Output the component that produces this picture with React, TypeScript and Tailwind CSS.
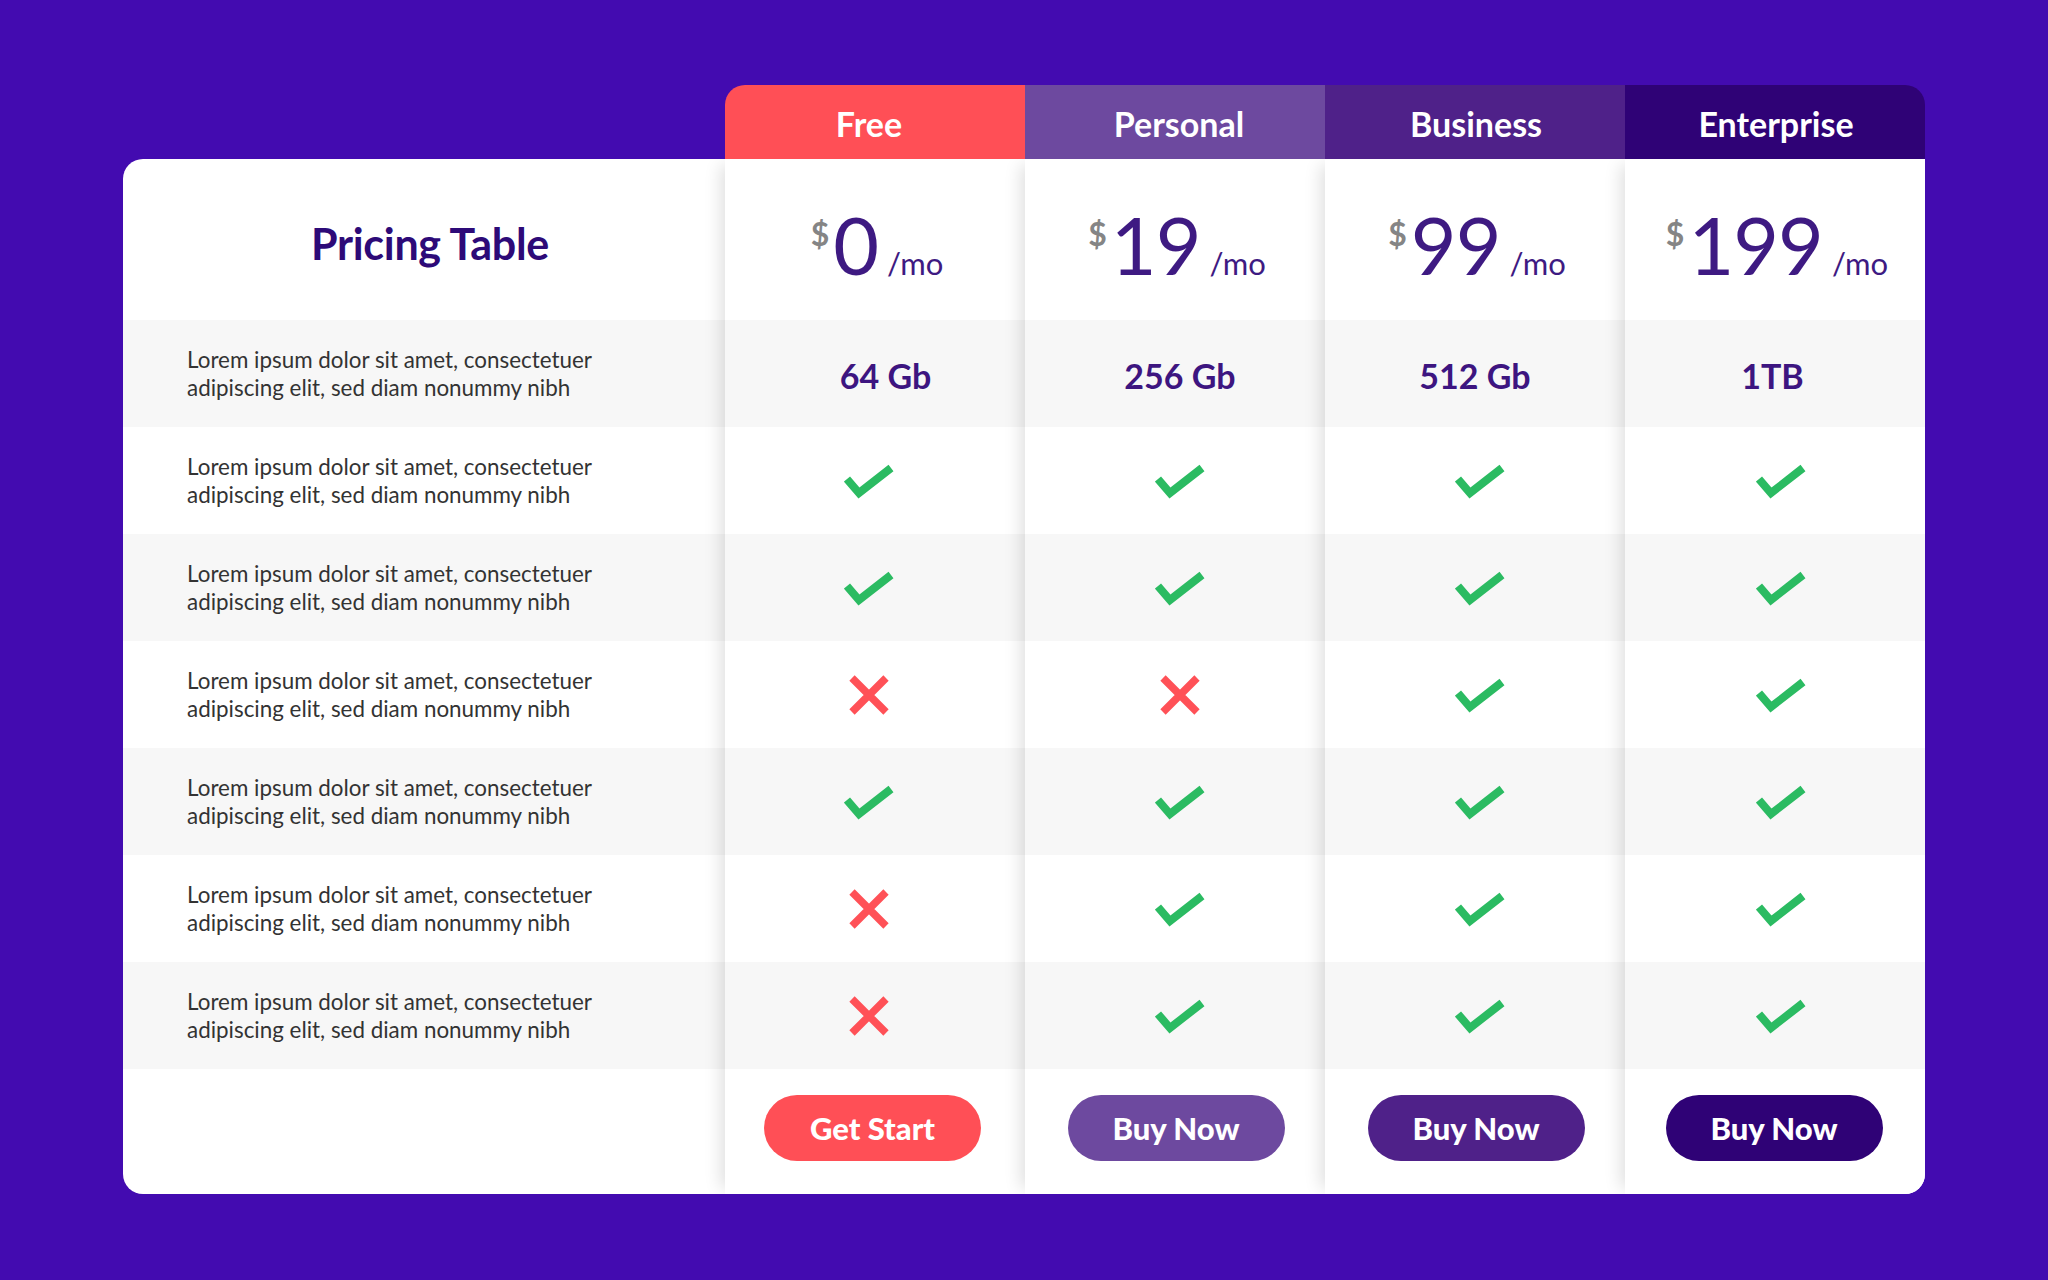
import React from 'react';

type Cell = 'yes' | 'no';

const plans = [
  { name: 'Free', price: '0', storage: '64 Gb', cta: 'Get Start', head: 'bg-[#ff4f56]', btn: 'bg-[#ff4f56]', nudge: '-ml-[12px]', btnNudge: '-ml-[5px]', headNudge: '-ml-[12px]', gbNudge: 'ml-[21px]' },
  { name: 'Personal', price: '19', storage: '256 Gb', cta: 'Buy Now', head: 'bg-[#6d499f]', btn: 'bg-[#6d499f]', nudge: 'ml-[10px]', btnNudge: 'ml-[2px]', headNudge: 'ml-[8px]', gbNudge: 'ml-[10px]' },
  { name: 'Business', price: '99', storage: '512 Gb', cta: 'Buy Now', head: 'bg-[#4f2189]', btn: 'bg-[#4f2189]', nudge: 'ml-[10px]', btnNudge: 'ml-[2px]', headNudge: 'ml-[2px]', gbNudge: 'ml-[0px]' },
  { name: 'Enterprise', price: '199', storage: '1TB', cta: 'Buy Now', head: 'bg-[#2f0276]', btn: 'bg-[#2f0276]', nudge: 'ml-[12px]', btnNudge: '-ml-[2px]', headNudge: 'ml-[2px]', gbNudge: '-ml-[5px]' },
];

// feature rows after the storage row, per plan column
const features: Cell[][] = [
  ['yes', 'yes', 'yes', 'yes'],
  ['yes', 'yes', 'yes', 'yes'],
  ['no', 'no', 'yes', 'yes'],
  ['yes', 'yes', 'yes', 'yes'],
  ['no', 'yes', 'yes', 'yes'],
  ['no', 'yes', 'yes', 'yes'],
];

const font = { fontFamily: '"Lato", "Open Sans", sans-serif' };

const Check = () => (
  <svg width="50" height="36" viewBox="0 0 50 36">
    <polyline points="3,16 15,30 47,5" fill="none" stroke="#2bbb62" strokeWidth="8" strokeLinejoin="miter" />
  </svg>
);

const Cross = () => (
  <svg width="40" height="40" viewBox="0 0 40 40">
    <path d="M3 3 L37 37 M37 3 L3 37" fill="none" stroke="#ff5157" strokeWidth="7.5" />
  </svg>
);

const rowBg = (i: number) => (i % 2 === 0 ? 'bg-[#f7f7f7]' : 'bg-white');

const Label = () => (
  <p className="text-[22.4px] leading-[28px] text-[#333333]">
    Lorem ipsum dolor sit amet, consectetuer
    <br />
    adipiscing elit, sed diam nonummy nibh
  </p>
);

const App: React.FC = () => {
  return (
    <div className="w-[2048px] h-[1280px] bg-[#430bb0] pt-[85px] pl-[123px]" style={font}>
      <div className="w-[1802px] flex flex-col">
        {/* Plan headers */}
        <div className="flex">
          <div className="w-[602px]" />
          {plans.map((p, i) => (
            <div
              key={p.name}
              className={`w-[300px] h-[74px] flex items-center justify-center pt-[3px] text-white text-[34px] font-bold ${p.head} ${
                i === 0 ? 'rounded-tl-[20px]' : ''
              } ${i === 3 ? 'rounded-tr-[20px]' : ''}`}
            >
              <span className={p.headNudge}>{p.name}</span>
            </div>
          ))}
        </div>

        {/* Table body */}
        <div className="flex bg-white rounded-[20px] rounded-tr-none overflow-hidden">
          {/* Label column */}
          <div className="w-[602px] flex flex-col">
            <div className="h-[161px] flex items-center justify-center pt-[10px] pl-[12px]">
              <h1 className="text-[43px] font-bold text-[#2d0a78] tracking-[-0.3px]">Pricing Table</h1>
            </div>
            {Array.from({ length: 7 }).map((_, i) => (
              <div key={i} className={`h-[107px] flex items-center pl-[64px] ${rowBg(i)}`}>
                <Label />
              </div>
            ))}
            <div className="h-[125px]" />
          </div>

          {/* Plan columns */}
          {plans.map((p, c) => (
            <div key={p.name} className="w-[300px] flex flex-col bg-white shadow-[-10px_0_16px_-6px_rgba(0,0,0,0.13)]">
              <div className="h-[161px] flex items-baseline justify-center pt-[46px] pl-[4px]">
                <span className="text-[32px] font-bold text-[#858585] self-start mt-[5px] mr-[4px]">$</span>
                <span className="text-[79px] leading-none tracking-[-1px] text-[#3e1a82]">{p.price}</span>
                <span className="text-[31px] text-[#3e1a82] ml-[9px]">/mo</span>
              </div>
              <div className={`h-[107px] flex items-center justify-center pt-[4px] ${rowBg(0)}`}>
                <span className={`text-[34px] font-bold text-[#3d1580] ${p.gbNudge}`}>{p.storage}</span>
              </div>
              {features.map((row, r) => (
                <div key={r} className={`h-[107px] flex items-center justify-center ${rowBg(r + 1)}`}>
                  <div className={p.nudge}>{row[c] === 'yes' ? <Check /> : <Cross />}</div>
                </div>
              ))}
              <div className="h-[125px] flex items-start justify-center pt-[26px]">
                <button className={`w-[217px] h-[66px] rounded-full text-white text-[31px] font-black ${p.btnNudge} ${p.btn}`}>
                  {p.cta}
                </button>
              </div>
            </div>
          ))}
        </div>
      </div>
    </div>
  );
};

export default App;
